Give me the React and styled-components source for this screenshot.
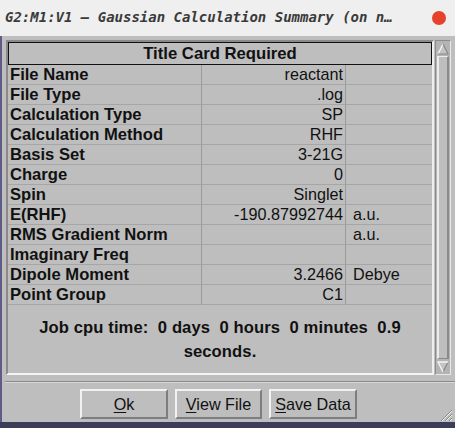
import React from "react";
import styled, { createGlobalStyle } from "styled-components";

const Global = createGlobalStyle`
  html, body { margin: 0; padding: 0; background: #bebebe; }
  body { font-family: "Liberation Sans", Arial, sans-serif; }
  * { box-sizing: border-box; }
`;

const Window = styled.div`
  width: 455px;
  height: 428px;
  display: flex;
  flex-direction: column;
  background: #bebebe;
  position: relative;
  overflow: hidden;
`;

const TitleBar = styled.div`
  height: 36px;
  flex: none;
  background: #efefef;
  display: flex;
  align-items: center;
  padding: 0 9px 2px 5px;
  justify-content: space-between;
`;

const TitleText = styled.div`
  font-family: "DejaVu Sans Mono", monospace;
  font-style: oblique;
  font-weight: bold;
  font-size: 14px;
  color: #3a3a3a;
  white-space: nowrap;
`;

const CloseDot = styled.div`
  width: 14px;
  height: 14px;
  border-radius: 50%;
  background: #e5412b;
  margin-top: 1px;
`;

const Body = styled.div`
  flex: 1;
  display: flex;
  flex-direction: column;
  border-left: 2px solid #5e5c86;
  background: #bebebe;
  position: relative;
`;

const Content = styled.div`
  display: flex;
  padding: 4px 4px 0 4px;
  gap: 1px;
`;

const Pane = styled.div`
  width: 428px;
  height: 335px;
  border-top: 2px solid #8a8a8a;
  border-left: 2px solid #8a8a8a;
  border-right: 2px solid #eeeeee;
  border-bottom: 2px solid #f4f4f4;
  display: flex;
  flex-direction: column;
`;

const Header = styled.div`
  height: 23px;
  flex: none;
  border: 1px solid #111;
  display: flex;
  align-items: center;
  justify-content: center;
  font-weight: bold;
  font-size: 16.7px;
  color: #111;
`;

const Table = styled.div`
  display: grid;
  grid-template-columns: 194px 144px 1fr;
`;

const Cell = styled.div`
  height: 20px;
  border-bottom: 1px solid #a6a6a6;
  border-right: ${(p) => (p.$last ? "none" : "1px solid #9a9a9a")};
  display: flex;
  align-items: center;
  font-size: ${(p) => (p.$bold ? "16.6px" : "16.2px")};
  color: #111;
  white-space: nowrap;
  font-weight: ${(p) => (p.$bold ? "bold" : "normal")};
  justify-content: ${(p) => (p.$right ? "flex-end" : "flex-start")};
  padding: ${(p) => (p.$right ? "0 2px 0 0" : p.$last ? "0 0 0 7px" : "0 0 0 2px")};
`;

const CpuText = styled.div`
  text-align: center;
  font-weight: bold;
  font-size: 16.6px;
  letter-spacing: 0.1px;
  line-height: 24px;
  color: #111;
  padding-top: 11px;
  white-space: pre;
`;

const Scrollbar = styled.div`
  width: 16px;
  height: 335px;
  border-left: 1px solid #8c8c8c;
  border-top: 1px solid #8c8c8c;
  border-right: 1px solid #e8e8e8;
  border-bottom: 1px solid #e8e8e8;
  display: flex;
  flex-direction: column;
  background: #b4b4b4;
`;

const Arrow = styled.div`
  height: 15px;
  flex: none;
  display: flex;
  align-items: center;
  justify-content: center;
`;

const Thumb = styled.div`
  flex: 1;
  margin: 0 1px;
  border-left: 2px solid #ececec;
  border-top: 1px solid #ececec;
  border-right: 2px solid #8a8a8a;
  border-bottom: 1px solid #8a8a8a;
  background: #bebebe;
`;

const Separator = styled.div`
  margin: 6px 0 0 3px;
  border-top: 1px solid #8a8a8a;
  border-bottom: 1px solid #d8d8d8;
`;

const ButtonRow = styled.div`
  display: flex;
  justify-content: center;
  gap: 7px;
  padding: 6px 0 0 0;
  margin-left: -20px;
`;

const Button = styled.button`
  width: ${(p) => p.$w}px;
  height: 30px;
  background: #bebebe;
  border-top: 2px solid #f2f2f2;
  border-left: 2px solid #f2f2f2;
  border-right: 2px solid #7e7e7e;
  border-bottom: 2px solid #7e7e7e;
  font-family: "Liberation Sans", Arial, sans-serif;
  font-size: 16.2px;
  color: #111;
  padding: 0;
  u { text-decoration: underline; text-underline-offset: 2px; }
`;

const Grip = styled.svg`
  position: absolute;
  right: 2px;
  bottom: 0;
`;

const BottomBar = styled.div`
  height: 6px;
  flex: none;
  background: #3c3e57;
`;

const rows = [
  ["File Name", "reactant", ""],
  ["File Type", ".log", ""],
  ["Calculation Type", "SP", ""],
  ["Calculation Method", "RHF", ""],
  ["Basis Set", "3-21G", ""],
  ["Charge", "0", ""],
  ["Spin", "Singlet", ""],
  ["E(RHF)", "-190.87992744", "a.u."],
  ["RMS Gradient Norm", "", "a.u."],
  ["Imaginary Freq", "", ""],
  ["Dipole Moment", "3.2466", "Debye"],
  ["Point Group", "C1", ""],
];

function UpArrow() {
  return (
    <svg width="12" height="12" viewBox="0 0 12 12">
      <polygon points="6,1 11,11 1,11" fill="#c4c4c4" />
      <polyline points="1,11 6,1" stroke="#f4f4f4" strokeWidth="1.4" fill="none" />
      <polyline points="6,1 11,11 1,11" stroke="#8a8a8a" strokeWidth="1.2" fill="none" />
    </svg>
  );
}

function DownArrow() {
  return (
    <svg width="12" height="12" viewBox="0 0 12 12">
      <polygon points="1,1 11,1 6,11" fill="#c4c4c4" />
      <polyline points="6,11 11,1" stroke="#8a8a8a" strokeWidth="1.2" fill="none" />
      <polyline points="6,11 1,1 11,1" stroke="#f4f4f4" strokeWidth="1.4" fill="none" />
    </svg>
  );
}

export default function App() {
  return (
    <Window>
      <Global />
      <TitleBar>
        <TitleText>G2:M1:V1 – Gaussian Calculation Summary (on n…</TitleText>
        <CloseDot />
      </TitleBar>
      <Body>
        <Content>
          <Pane>
            <Header>Title Card Required</Header>
            <Table>
              {rows.map(([a, b, c]) => (
                <React.Fragment key={a}>
                  <Cell $bold>{a}</Cell>
                  <Cell $right>{b}</Cell>
                  <Cell $last>{c}</Cell>
                </React.Fragment>
              ))}
            </Table>
            <CpuText>
              {"Job cpu time:  0 days  0 hours  0 minutes  0.9\nseconds."}
            </CpuText>
          </Pane>
          <Scrollbar>
            <Arrow><UpArrow /></Arrow>
            <Thumb />
            <Arrow><DownArrow /></Arrow>
          </Scrollbar>
        </Content>
        <Separator />
        <ButtonRow>
          <Button $w={88}><u>O</u>k</Button>
          <Button $w={87}><u>V</u>iew File</Button>
          <Button $w={88}><u>S</u>ave Data</Button>
        </ButtonRow>
        <Grip width="14" height="14" viewBox="0 0 14 14">
          <line x1="2" y1="13" x2="13" y2="2" stroke="#8a8a8a" strokeWidth="1" />
          <line x1="3" y1="13" x2="13" y2="3" stroke="#f0f0f0" strokeWidth="1" />
          <line x1="6" y1="13" x2="13" y2="6" stroke="#8a8a8a" strokeWidth="1" />
          <line x1="7" y1="13" x2="13" y2="7" stroke="#f0f0f0" strokeWidth="1" />
          <line x1="10" y1="13" x2="13" y2="10" stroke="#8a8a8a" strokeWidth="1" />
          <line x1="11" y1="13" x2="13" y2="11" stroke="#f0f0f0" strokeWidth="1" />
        </Grip>
      </Body>
      <BottomBar />
    </Window>
  );
}
